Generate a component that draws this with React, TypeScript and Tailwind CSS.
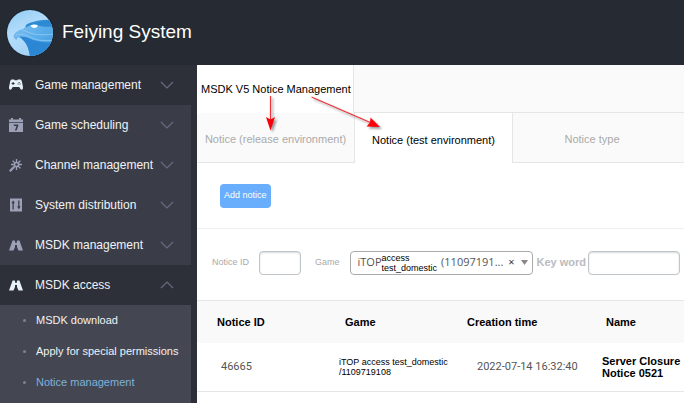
import {ReactNode, useState} from "react";
import clsx from "clsx";

interface MenuItem {
    label: string;
    icon: ReactNode;
    isDark?: boolean;
    isOpen?: boolean;
}

interface Notice {
    id: string;
    gameName: string;
    gameId: string;
    createdAt: string;
    name: string;
}

const GamepadIcon = () => (
    <svg width="14" height="14" viewBox="0 0 14 14" fill="currentColor">
        <path
            fillRule="evenodd"
            d="M3.2 1.500h2l.6.7h2.400l.6-.7h2c1 0 1.700.600 2 1.700l1 4.800c.5 2.300-.2 3.700-1.100 3.700-1 0-1.600-.9-2.400-2.600H3.700c-.8 1.700-1.400 2.600-2.400 2.600-.9 0-1.600-1.400-1.100-3.700l1-4.800c.3-1.100 1-1.700 2-1.700ZM3.600 4v1H2.600v1h1v1h1V6h1V5h-1V4h-1Zm6 0v1h1V4h-1Zm-1 1.400v1h1v-1h-1Zm2 0v1h1v-1h-1Z"
        />
    </svg>
);

const CalendarIcon = () => (
    <svg width="14" height="14" viewBox="0 0 14 14" fill="currentColor">
        <path
            fillRule="evenodd"
            d="M0 1.500h2V0h2v1.500h6V0h2v1.500h2V4H0V1.500Zm0 3.200h14V14H0V4.700ZM4.800 6.500v1.400h2.700L5.900 12.500h1.700l1.700-4.800V6.500H4.800Z"
        />
    </svg>
);

const WandIcon = () => (
    <svg
        width="14"
        height="14"
        viewBox="0 0 14 14"
        fill="none"
        stroke="currentColor"
    >
        <path
            strokeWidth="1.300"
            d="M7.500 1v3M7.500 9v3M2 6.500h3M10 6.500h3M3.600 2.600l2.100 2.100M11.400 2.600 9.300 4.700M11.400 10.400 9.300 8.300"
        />
        <circle cx="7.500" cy="6.500" r="2.100" strokeWidth="1.500" />
        <path strokeWidth="2.200" d="M5.300 8.700.8 13.200" />
    </svg>
);

const SlidersIcon = () => (
    <svg width="14" height="14" viewBox="0 0 14 14" fill="currentColor">
        <path
            fillRule="evenodd"
            d="M1 .500h12v13H1V.500ZM4 2.500 2.400 5.200h1.100V11.500h1.300V5.200h1.100L4.300 2.500ZM9.200 2.500v5.800H8.100l1.600 3h.3l1.600-3h-1.100V2.500H9.200Z"
        />
    </svg>
);

const MsdkIcon = () => (
    <svg width="14" height="14" viewBox="0 0 14 14" fill="currentColor">
        <path d="M3.600 2.500h2.200l.6 2.500h1.200l.6-2.500h2.200L14 12.500H9.500L8 9V7H6v2l-1.500 3.500H0L3.600 2.500Z" />
    </svg>
);

const ChevronIcon = ({isOpen}: {isOpen?: boolean}) => (
    <svg
        width="14"
        height="8"
        viewBox="0 0 14 8"
        fill="none"
        stroke="currentColor"
        className={clsx("shrink-0", isOpen && "rotate-180")}
    >
        <path d="M1 1l6 6 6-6" strokeWidth="1.200" />
    </svg>
);

const Logo = () => (
    <svg width="48" height="48" viewBox="0 0 48 48" aria-hidden="true">
        <defs>
            <linearGradient id="sky" x1="0" y1="0" x2="0.500" y2="1">
                <stop offset="0" stopColor="#8fccf5" />
                <stop offset="0.500" stopColor="#b4dcfa" />
                <stop offset="1" stopColor="#a3d2f6" />
            </linearGradient>
            <linearGradient id="head" x1="0" y1="0" x2="1" y2="1">
                <stop offset="0" stopColor="#86c4f1" />
                <stop offset="0.500" stopColor="#5aaeea" />
                <stop offset="1" stopColor="#3f98dd" />
            </linearGradient>
            <clipPath id="disc">
                <circle cx="24" cy="24" r="23" />
            </clipPath>
        </defs>
        <circle cx="24" cy="24" r="24" fill="#1b2732" />
        <g clipPath="url(#disc)">
            <rect width="48" height="48" fill="url(#sky)" />
            <path
                fill="url(#head)"
                d="M48 11C36 10 25 12 20 16c-1 1-1 3-3 4-5 1-9 4-9.500 7.500.5 1.500 1.500 3 3.500 3.500-.5-2 1-3 4-3 5 4 8 11 9 20h24Z"
            />
            <path
                fill="#2f8ad6"
                d="M20 16c6-4 17-5.500 28-5v6c-6 1-11 1-16-.5-4-1.500-8-.5-12 2Z"
            />
            <path
                fill="#2b86d3"
                d="M13 28c6-1 9 1 14 3 7 2 14 3 21 2v15H24c-1-9-4-16-11-20Z"
            />
            <path
                fill="none"
                stroke="#9dd0f5"
                strokeWidth="0.700"
                d="M17 21c7 4 16 6 31 4M10 26c6-2 12 1 16 3 7 3 14 3 22 2"
            />
            <path
                fill="#fff"
                d="M24.500 16.500c2-1.200 5-1.500 7-.5.500 1.500-1 3-3 3-1.800 0-3.500-1-4-2.500Z"
            />
        </g>
    </svg>
);

const menuItems: MenuItem[] = [
    {label: "Game management", icon: <GamepadIcon />, isDark: true},
    {label: "Game scheduling", icon: <CalendarIcon />},
    {label: "Channel management", icon: <WandIcon />},
    {label: "System distribution", icon: <SlidersIcon />},
    {label: "MSDK management", icon: <MsdkIcon />},
    {label: "MSDK access", icon: <MsdkIcon />, isDark: true, isOpen: true},
];

const subMenuItems = [
    "MSDK download",
    "Apply for special permissions",
    "Notice management",
];

const tabs = [
    "Notice (release environment)",
    "Notice (test environment)",
    "Notice type",
];

const notices: Notice[] = [
    {
        id: "46665",
        gameName: "iTOP access test_domestic",
        gameId: "/1109719108",
        createdAt: "2022-07-14 16:32:40",
        name: "Server Closure Notice 0521",
    },
];

function Sidebar() {
    return (
        <nav className="flex w-[197px] shrink-0 flex-col bg-[#2e3039] pr-1.5 text-[#f1f2f4]">
            {menuItems.map((item) => (
                <button
                    key={item.label}
                    type="button"
                    aria-expanded={!!item.isOpen}
                    className={clsx(
                        "flex h-10 items-center pr-[17px] pl-[9px] text-left text-[12px] whitespace-nowrap",
                        item.isDark ? "bg-[#2e3039]" : "bg-[#3a3d48]"
                    )}
                >
                    <span
                        className={clsx(
                            "mr-3 shrink-0",
                            item.isDark ? "text-[#e6f1fa]" : "text-[#9da1b8]"
                        )}
                    >
                        {item.icon}
                    </span>
                    {item.label}
                    <span className="ml-auto text-[#676b82]">
                        <ChevronIcon isOpen={item.isOpen} />
                    </span>
                </button>
            ))}
            <ul className="flex-1 bg-[#444752]">
                {subMenuItems.map((label) => (
                    <li
                        key={label}
                        className="flex h-[31px] items-center pl-[23px]"
                    >
                        <span className="mr-2.5 size-[3px] rounded-full bg-[#7c809a]" />
                        <a
                            href="#"
                            className={clsx(
                                "text-[11px] whitespace-nowrap",
                                label === "Notice management" &&
                                    "text-[#7fb2dc]"
                            )}
                        >
                            {label}
                        </a>
                    </li>
                ))}
            </ul>
        </nav>
    );
}

function Arrows() {
    return (
        <svg
            width="200"
            height="80"
            viewBox="0 0 200 80"
            className="pointer-events-none absolute top-0 left-0 drop-shadow-[2px_2px_1px_rgba(0,0,0,0.4)]"
            aria-hidden="true"
        >
            <g stroke="#f5303a" strokeWidth="1.200" fill="#fb0007">
                <path d="M73.500 31v24M114.500 32l60 26" />
                <path
                    stroke="none"
                    d="M73.500 65.500 69 52l4.500 2.500L78 52ZM183 62l-13.500-.5 3.500-4 .5-5Z"
                />
            </g>
        </svg>
    );
}

function Tabs() {
    const [current, setCurrent] = useState(tabs[1]);

    return (
        <div className="relative">
            <div className="flex h-12 border-b border-[#e6e6e6] bg-[#fafafa]">
                <h1 className="-mb-px flex w-[157px] shrink-0 items-center border-r border-[#e6e6e6] bg-white pl-1 text-[11px] whitespace-nowrap text-black">
                    MSDK V5 Notice Management
                </h1>
            </div>
            <div
                role="tablist"
                className="flex h-[50px] border-b border-[#e6e6e6] bg-[#fafafa]"
            >
                {tabs.map((tab) => (
                    <button
                        key={tab}
                        type="button"
                        role="tab"
                        aria-selected={tab === current}
                        onClick={() => setCurrent(tab)}
                        className={clsx(
                            "-mb-px w-[158px] shrink-0 border-[#e6e6e6] pt-1 text-[11px] whitespace-nowrap not-last:border-r",
                            tab === current
                                ? "bg-white text-black"
                                : "border-b text-[#aaaaaa]"
                        )}
                    >
                        {tab}
                    </button>
                ))}
            </div>
        </div>
    );
}

function GameSelect() {
    return (
        <div className="relative ml-2.5 flex h-6 w-[183px] shrink-0 items-center rounded border border-[#aaaaaa] bg-white pl-[7px] whitespace-nowrap text-[#555555]">
            <span className="font-['Open_Sans'] text-[11px]">iTOP</span>
            <span className="text-[9px] leading-[10px] text-black">
                access
                <br />
                test_domestic
            </span>
            <span className="ml-1 font-['Open_Sans'] text-[11px]">
                (11097191...
            </span>
            <span className="ml-auto font-['Open_Sans'] text-[11px] text-[#333333]">
                ×
            </span>
            <svg width="7" height="5" viewBox="0 0 7 5" className="mr-1 ml-1.5">
                <path d="M0 0h7L3.500 5Z" fill="#888888" />
            </svg>
            <select
                id="game"
                className="absolute inset-0 size-full cursor-pointer opacity-0"
            >
                <option>iTOP access test_domestic</option>
            </select>
        </div>
    );
}

function Filters() {
    return (
        <form className="flex h-[71px] items-center pr-1 pb-1 pl-[15px]">
            <label
                htmlFor="noticeId"
                className="text-[9px] whitespace-nowrap text-[#aaaaaa]"
            >
                Notice ID
            </label>
            <input
                id="noticeId"
                type="text"
                className="ml-2.5 h-6 w-[42px] shrink-0 rounded-sm border border-[#bfc5c8] bg-white px-1 text-[11px] shadow-[inset_0_1px_2px_#d4dadd]"
            />
            <label
                htmlFor="game"
                className="ml-3.5 text-[9px] whitespace-nowrap text-[#aaaaaa]"
            >
                Game
            </label>
            <GameSelect />
            <label
                htmlFor="keyword"
                className="ml-1 text-[11px] font-bold whitespace-nowrap text-[#b9bbc2]"
            >
                Key word
            </label>
            <input
                id="keyword"
                type="text"
                className="ml-0.5 h-6 min-w-0 flex-1 rounded-sm border border-[#bfc5c8] bg-white px-1 text-[11px] shadow-[inset_0_1px_2px_#d4dadd]"
            />
        </form>
    );
}

function NoticeTable() {
    return (
        <table className="w-full table-fixed text-left text-black">
            <colgroup>
                <col className="w-[128px]" />
                <col className="w-[132px]" />
                <col className="w-[139px]" />
                <col />
            </colgroup>
            <thead>
                <tr className="h-[42px] border-t border-[#e6e6e6] bg-[#f9f9f9] text-[11px]">
                    <th className="pl-5">Notice ID</th>
                    <th className="pl-5">Game</th>
                    <th className="pl-2.5">Creation time</th>
                    <th className="pl-2.5">Name</th>
                </tr>
            </thead>
            <tbody>
                {notices.map((notice) => (
                    <tr
                        key={notice.id}
                        className="h-[49px] border-b border-[#e6e6e6] bg-white"
                    >
                        <td className="pl-6 font-['Roboto'] text-[11px] text-[#555555]">
                            {notice.id}
                        </td>
                        <td className="pl-3.5 text-[9px] leading-[10px] whitespace-nowrap">
                            {notice.gameName}
                            <br />
                            {notice.gameId}
                        </td>
                        <td className="pl-5 font-['Roboto'] text-[11px] whitespace-nowrap text-[#555555]">
                            {notice.createdAt}
                        </td>
                        <td className="pl-1.5 text-[11px] leading-3 font-bold">
                            {notice.name}
                        </td>
                    </tr>
                ))}
            </tbody>
        </table>
    );
}

function App() {
    return (
        <div className="flex min-h-screen flex-col bg-white font-['Liberation_Sans',sans-serif]">
            <header className="flex h-[65px] items-center gap-2 bg-[#262a32] pl-1.5 text-[19px] text-white">
                <Logo />
                Feiying System
            </header>
            <div className="flex flex-1">
                <Sidebar />
                <main className="relative min-w-0 flex-1">
                    <Tabs />
                    <Arrows />
                    <div className="flex h-[66px] items-center border-b border-[#eeeeee] pl-[23px]">
                        <button
                            type="button"
                            className="h-6 rounded-sm bg-[#68aefc] px-1 text-[9px] whitespace-nowrap text-white"
                        >
                            Add notice
                        </button>
                    </div>
                    <Filters />
                    <NoticeTable />
                </main>
            </div>
        </div>
    );
}

export default App;
